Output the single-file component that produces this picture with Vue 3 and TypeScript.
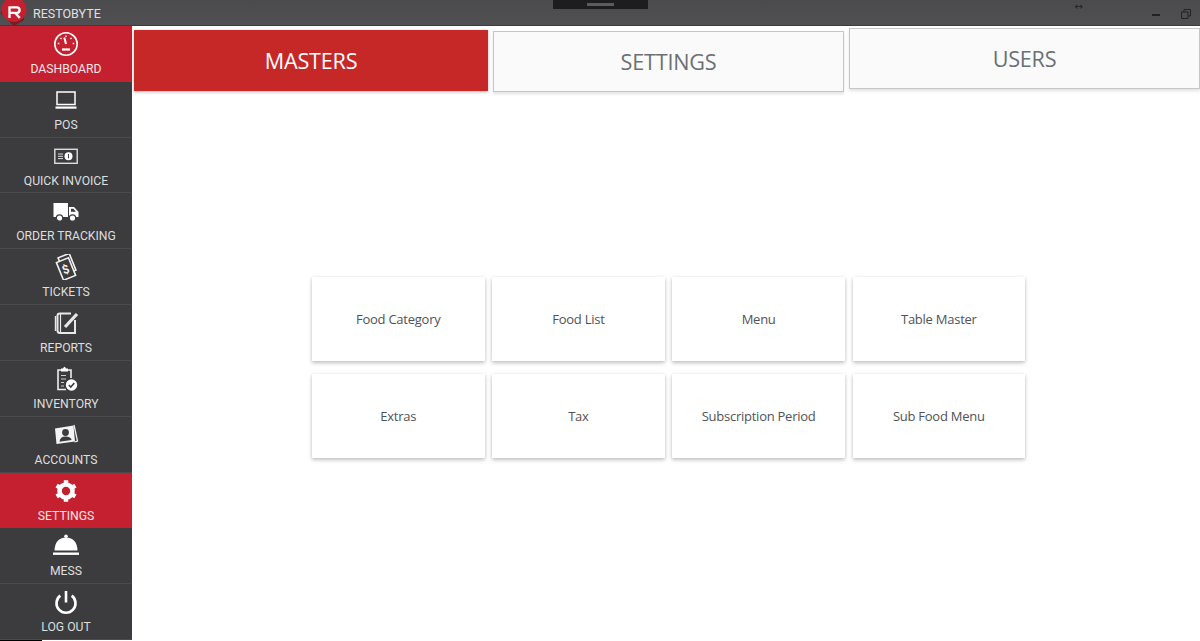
<script setup lang="ts">
interface NavItem { label: string; icon: string; active?: boolean }
const nav: NavItem[] = [
  { label: 'DASHBOARD', icon: 'gauge', active: true },
  { label: 'POS', icon: 'laptop' },
  { label: 'QUICK INVOICE', icon: 'invoice' },
  { label: 'ORDER TRACKING', icon: 'truck' },
  { label: 'TICKETS', icon: 'tickets' },
  { label: 'REPORTS', icon: 'reports' },
  { label: 'INVENTORY', icon: 'inventory' },
  { label: 'ACCOUNTS', icon: 'accounts' },
  { label: 'SETTINGS', icon: 'gear', active: true },
  { label: 'MESS', icon: 'cloche' },
  { label: 'LOG OUT', icon: 'power' },
]
const cards = ['Food Category', 'Food List', 'Menu', 'Table Master', 'Extras', 'Tax', 'Subscription Period', 'Sub Food Menu']
</script>

<template>
  <div class="app">
    <header class="titlebar">
      <div class="brand">
        <svg class="logo" viewBox="0 0 28 26" width="28" height="26">
          <path d="M0.5 13 L14 26 L24 20 L24 10 L3 8 Z" fill="#7a1a22" />
          <circle cx="14" cy="9.5" r="12.5" fill="#c4202f" />
          <path d="M9.5 18 V7.3 H16.8 Q19.6 7.3 19.6 10 Q19.6 12.9 16.8 12.9 H10.5 M15.3 12.9 L19.8 18" fill="none" stroke="#fff" stroke-width="2.3" />
        </svg>
        <span class="brand-name">RESTOBYTE</span>
      </div>
      <div class="grip"><i></i></div>
      <div class="win-controls">
        <span class="resize">↔</span>
        <span class="min"></span>
        <svg viewBox="0 0 10 10" width="10" height="10" class="restore">
          <path d="M0.5 3 H7 V9.5 H0.5 Z M3 3 V0.5 H9.5 V7 H7" fill="none" stroke="#222" stroke-width="1" />
        </svg>
      </div>
    </header>

    <div class="body">
      <nav class="sidebar">
        <a v-for="item in nav" :key="item.label" class="nav-item" :class="{ active: item.active }">
          <svg class="nav-icon" viewBox="0 0 26 26" width="26" height="26">
            <g v-if="item.icon === 'gauge'" fill="none" stroke="#fff">
              <circle cx="13" cy="13" r="11.2" stroke-width="1.6" />
              <path d="M13 13 L11.3 6.5" stroke-width="2" />
              <path d="M9 18.5 H17" stroke-width="2.2" />
              <path d="M13 4.5 V6 M7.5 6.8 L8.5 8 M18.5 6.8 L17.5 8 M4.8 12.5 H6.3 M19.7 12.5 H21.2" stroke-width="1.3" />
            </g>
            <g v-else-if="item.icon === 'laptop'" fill="none" stroke="#fff">
              <rect x="4" y="5" width="18" height="12.5" stroke-width="1.5" />
              <path d="M2.5 20.6 H23.5" stroke-width="2.2" />
            </g>
            <g v-else-if="item.icon === 'invoice'">
              <rect x="1.8" y="6.3" width="22.4" height="14" fill="none" stroke="#ddd" stroke-width="1.4" />
              <path d="M5 11 H10 M5 13.3 H10 M5 15.6 H10" stroke="#ddd" stroke-width="1" />
              <circle cx="15.5" cy="13.2" r="4" fill="#fff" />
              <path d="M15.5 11 V15.4" stroke="#444" stroke-width="1" />
            </g>
            <g v-else-if="item.icon === 'truck'" fill="#fff">
              <path d="M0.5 5 H15 V19 H0.5 Z" />
              <path d="M16 9 H21 L25.5 14 V19 H16 Z" />
              <path d="M18 10.7 H20.4 L23 13.8 H18 Z" fill="#3c3c3e" />
              <circle cx="6.5" cy="20" r="3.2" stroke="#3c3c3e" stroke-width="1.2" />
              <circle cx="19.5" cy="20" r="3.2" stroke="#3c3c3e" stroke-width="1.2" />
            </g>
            <g v-else-if="item.icon === 'tickets'" fill="none" stroke="#f0f0f0" stroke-width="1.6">
              <rect x="8" y="1" width="12" height="18" transform="rotate(-22 14 10)" />
              <rect x="6.5" y="5.5" width="13" height="19" fill="#3c3c3e" transform="rotate(-22 13 15)" />
              <text x="13" y="19.5" font-size="12" font-weight="700" font-family="Roboto, sans-serif" fill="#f0f0f0" stroke="none" text-anchor="middle" transform="rotate(-22 13 16)">$</text>
            </g>
            <g v-else-if="item.icon === 'reports'" fill="none" stroke="#e8e8e8">
              <path d="M22 10 V23 H7 Q4.5 23 4.5 20.5 V5.5 Q4.5 3.5 7 3.5 H18" stroke-width="2" />
              <path d="M7.5 3.5 V23" stroke-width="1.2" />
              <path d="M2.5 6 V21" stroke-width="1.4" />
              <path d="M12 17 L24 4" stroke-width="3.2" />
            </g>
            <g v-else-if="item.icon === 'inventory'">
              <path d="M18 12 V4 H5 V23.5 H13" fill="none" stroke="#eee" stroke-width="1.6" />
              <path d="M8 5 V2.5 H10 Q11.5 -0.8 13 2.5 H15 V5.5 H8 Z" fill="#fff" />
              <path d="M8 9.5 H13 M8 13 H13 M8 16.5 H11 M8 20 H11" stroke="#ccc" stroke-width="1" />
              <circle cx="18.5" cy="19" r="5.7" fill="#fff" />
              <path d="M15.8 19 L17.8 21 L21.3 17" fill="none" stroke="#3c3c3e" stroke-width="1.6" />
            </g>
            <g v-else-if="item.icon === 'accounts'">
              <path d="M21 3 L24.5 19 L21.5 20" fill="none" stroke="#eee" stroke-width="1.3" />
              <path d="M2 6.5 L20.5 3.5 L22 19.5 L3.5 22 Z" fill="#f4f4f4" />
              <circle cx="12.5" cy="10.5" r="3.4" fill="#3c3c3e" />
              <path d="M6.5 19.8 Q7 14.5 12.5 14.5 Q18 14.5 18.6 18 Z" fill="#3c3c3e" />
            </g>
            <g v-else-if="item.icon === 'gear'">
              <circle cx="13" cy="13" r="6.5" fill="none" stroke="#fff" stroke-width="4.6" />
              <path d="M13 2.2 V23.8 M3.6 7.6 L22.4 18.4 M3.6 18.4 L22.4 7.6" stroke="#fff" stroke-width="4.4" />
              <circle cx="13" cy="13" r="4.2" fill="#c4202f" />
            </g>
            <g v-else-if="item.icon === 'cloche'" fill="#fff">
              <circle cx="13" cy="3.2" r="1.8" />
              <path d="M1.5 17.5 Q2 5 13 4.5 Q24 5 24.5 17.5 Z" />
              <rect x="0" y="19.5" width="26" height="2.4" />
            </g>
            <g v-else-if="item.icon === 'power'" fill="none" stroke="#fff" stroke-width="2.6">
              <path d="M7.3 6.6 A9.5 9.5 0 1 0 18.7 6.6" />
              <path d="M13 2 V13.5" />
            </g>
          </svg>
          <span class="nav-label">{{ item.label }}</span>
        </a>
      </nav>

      <main class="main">
        <div class="tabs">
          <button class="tab tab-masters">MASTERS</button>
          <button class="tab tab-settings">SETTINGS</button>
          <button class="tab tab-users">USERS</button>
        </div>
        <div class="cards">
          <div v-for="c in cards" :key="c" class="card">{{ c }}</div>
        </div>
      </main>
    </div>
  </div>
</template>

<style scoped>
.app { width: 1200px; height: 641px; display: flex; flex-direction: column; overflow: hidden; background: #fff; font-family: Roboto, sans-serif; }
.titlebar { height: 26px; flex: none; display: grid; grid-template-columns: 553px 95px 1fr; background: linear-gradient(#4b4b4d, #505052); border-bottom: 1px solid #3c3c3e; box-sizing: border-box; }
.brand { display: flex; align-items: flex-start; }
.logo { display: block; flex: none; }
.brand-name { margin-left: 5px; margin-top: 6px; font-size: 12.5px; line-height: 16px; color: #e0e0e0; }
.grip { height: 9px; background: #1d1d1f; display: flex; justify-content: center; align-items: flex-start; }
.grip i { display: block; width: 27px; height: 3px; margin-top: 3px; background: #5b5b5d; }
.win-controls { display: flex; align-items: flex-start; justify-content: flex-end; }
.resize { font-size: 10px; line-height: 10px; margin-top: 2px; color: #222; font-family: "DejaVu Sans", sans-serif; }
.min { width: 8px; height: 2px; margin: 14px 0 0 69px; background: #222; }
.restore { margin: 9px 9px 0 21px; }
.body { flex: 1; min-height: 0; display: flex; }
.sidebar { width: 132px; flex: none; display: flex; flex-direction: column; background: #3c3c3e; }
.sidebar::after { content: ""; flex: none; height: 1px; background: linear-gradient(90deg, #000 42px, #fff 42px); }
.nav-item { flex: 1; min-height: 0; display: flex; flex-direction: column; align-items: center; box-sizing: border-box; padding-top: 5px; border-bottom: 1px solid #4a4a4c; color: #dedede; }
.nav-item.active { background: #c4202f; color: #f4e4e6; border-bottom-color: #c4202f; }
.nav-icon { display: block; flex: none; }
.nav-label { font-size: 12.2px; line-height: 16px; margin-top: 4px; white-space: nowrap; }
.main { flex: 1; min-width: 0; display: flex; flex-direction: column; }
.tabs { display: grid; grid-template-columns: 354px 351px 351px; column-gap: 5px; padding-left: 2px; align-items: start; height: 66px; flex: none; }
.tab { font-family: "Open Sans", sans-serif; font-size: 21.6px; letter-spacing: -0.2px; height: 61px; border: 0; padding: 0; color: #6b7074; background: #fafafa; box-sizing: border-box; border: 1.5px solid #c6c6c6; }
.tab-masters { margin-top: 4px; background: #c62828; color: #fff; border: 0; box-shadow: 0 1px 3px rgba(0,0,0,.3); }
.tab-settings { margin-top: 5px; box-shadow: 0 2px 3px rgba(0,0,0,.12); }
.tab-users { margin-top: 2px; box-shadow: 0 2px 3px rgba(0,0,0,.12); }
.cards { display: grid; grid-template-columns: repeat(4, 172.5px); grid-auto-rows: 84px; column-gap: 7.7px; row-gap: 13px; margin: 185px 0 0 180px; }
.card { display: flex; align-items: center; justify-content: center; background: #fff; font-family: "Open Sans", sans-serif; font-size: 13px; letter-spacing: -0.25px; color: #505258; box-shadow: 0 2px 4px rgba(0,0,0,.24), 0 0 3px rgba(0,0,0,.06); }
</style>

<style>
html, body { margin: 0; background: #fff; }
</style>
